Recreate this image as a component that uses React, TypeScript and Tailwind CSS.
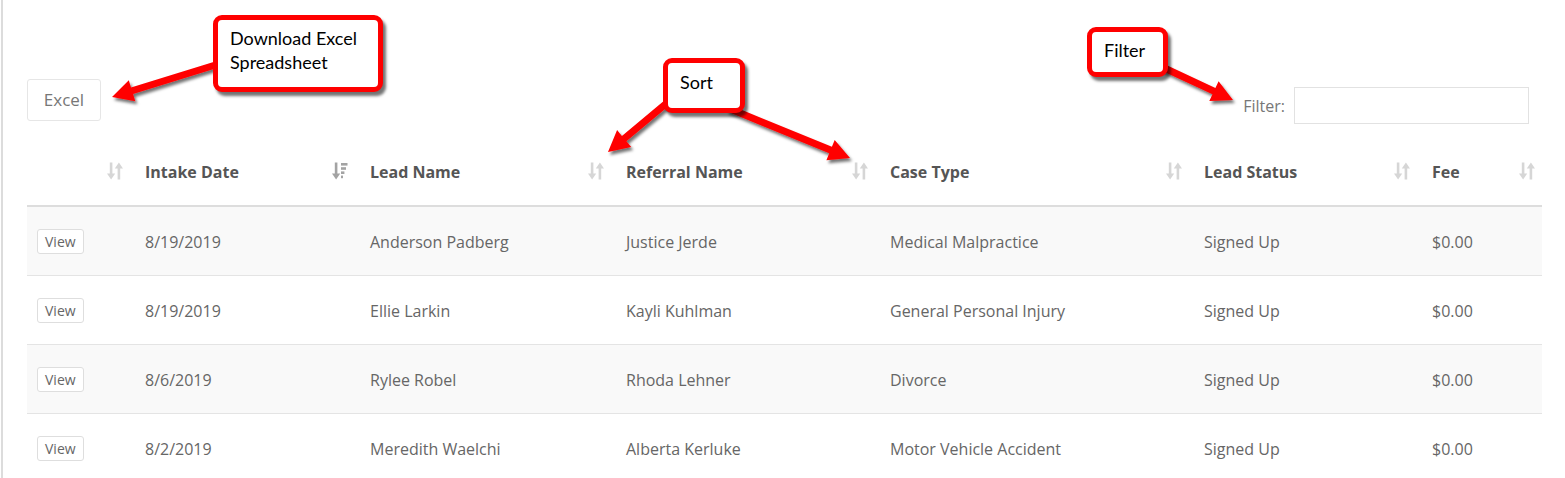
import React from "react";

const leads = [
  { date: "8/19/2019", name: "Anderson Padberg", referral: "Justice Jerde", type: "Medical Malpractice", status: "Signed Up", fee: "$0.00" },
  { date: "8/19/2019", name: "Ellie Larkin", referral: "Kayli Kuhlman", type: "General Personal Injury", status: "Signed Up", fee: "$0.00" },
  { date: "8/6/2019", name: "Rylee Robel", referral: "Rhoda Lehner", type: "Divorce", status: "Signed Up", fee: "$0.00" },
  { date: "8/2/2019", name: "Meredith Waelchi", referral: "Alberta Kerluke", type: "Motor Vehicle Accident", status: "Signed Up", fee: "$0.00" },
];

const columns = [
  { label: "", w: "w-[103px]", active: false },
  { label: "Intake Date", w: "w-[225px]", active: true },
  { label: "Lead Name", w: "w-[256px]", active: false },
  { label: "Referral Name", w: "w-[264px]", active: false },
  { label: "Case Type", w: "w-[314px]", active: false },
  { label: "Lead Status", w: "w-[228px]", active: false },
  { label: "Fee", w: "w-[125px]", active: false },
];

function SortIcon({ active }: { active: boolean }) {
  if (active) {
    return (
      <svg width="16" height="18" viewBox="0 0 16 18" className="text-[#a3a3a3]" fill="currentColor">
        <rect x="2.8" y="0.5" width="2.6" height="12" />
        <polygon points="0,11.5 8.2,11.5 4.1,17.5" />
        <rect x="9" y="1" width="6.5" height="2.6" />
        <rect x="9" y="5.2" width="5" height="2.6" />
        <rect x="9" y="9.4" width="3.4" height="2.6" />
        <rect x="9" y="13.6" width="2" height="2.6" />
      </svg>
    );
  }
  return (
    <svg width="16" height="18" viewBox="0 0 16 18" className="text-[#d6d6d6]" fill="currentColor">
      <rect x="2.8" y="0.5" width="2.6" height="12" />
      <polygon points="0,11.5 8.2,11.5 4.1,17.5" />
      <rect x="10.6" y="5.5" width="2.6" height="12" />
      <polygon points="7.8,6.5 16,6.5 11.9,0.5" />
    </svg>
  );
}

function arrow(x1: number, y1: number, x2: number, y2: number) {
  const dx = x2 - x1, dy = y2 - y1;
  const len = Math.hypot(dx, dy);
  const ux = dx / len, uy = dy / len;
  const nx = -uy, ny = ux;
  const w = 3.5, hw = 11, hl = 21;
  const bx = x2 - ux * hl, by = y2 - uy * hl;
  const pts = [
    [x1 + nx * w, y1 + ny * w],
    [bx + nx * w, by + ny * w],
    [bx + nx * hw, by + ny * hw],
    [x2, y2],
    [bx - nx * hw, by - ny * hw],
    [bx - nx * w, by - ny * w],
    [x1 - nx * w, y1 - ny * w],
  ];
  return pts.map(p => p.map(v => v.toFixed(1)).join(",")).join(" ");
}

function Callout({ className, children }: { className: string; children: React.ReactNode }) {
  return (
    <div className={`absolute bg-white border-[5px] border-[#ff0000] rounded-[9px] pl-3 pt-[6px] text-black text-[18px] leading-[24px] shadow-[3px_4px_3px_rgba(0,0,0,0.55)] font-['Lato',sans-serif] ${className}`}>
      {children}
    </div>
  );
}

export default function App() {
  return (
    <div className="relative h-[478px] bg-white border-l-2 border-[#dcdcdc] ml-px pl-[24px] pr-[23px] pt-[79px] font-['Open_Sans',sans-serif] overflow-hidden">
      <div className="flex items-start justify-between pr-[13px]">
        <button className="h-[42px] w-[74px] border border-[#e6e6e6] rounded-[3px] text-[17px] text-[#777]">Excel</button>
        <div className="flex items-center gap-[9px] mt-2">
          <span className="text-[16px] text-[#777]">Filter:</span>
          <input className="h-[37px] w-[235px] border border-[#e2e2e2] outline-none px-2 text-sm" />
        </div>
      </div>

      <table className="table-fixed w-[1515px] mt-[13px] border-collapse">
        <thead>
          <tr className="border-b-2 border-[#dddddd]">
            {columns.map((c, i) => (
              <th key={i} className={`${c.w} relative pl-[15px] pt-[24px] pb-[22px] text-left text-[16px] leading-[22px] font-bold text-[#555]`}>
                {c.label}
                <span className="absolute right-[7px] top-1/2 -translate-y-1/2 flex">
                  <SortIcon active={c.active} />
                </span>
              </th>
            ))}
          </tr>
        </thead>
        <tbody>
          {leads.map((l, i) => (
            <tr key={i} className={`border-t border-[#e4e4e4] ${i % 2 === 0 ? "bg-[#f9f9f9]" : "bg-white"}`}>
              <td className="pl-[10px] h-[69px] pt-[2px] pb-0 align-middle">
                <button className="block h-[25px] px-[7px] bg-white border border-[#dedede] rounded-[3px] text-[14px] leading-[20px] text-[#666]">View</button>
              </td>
              {[l.date, l.name, l.referral, l.type, l.status, l.fee].map((v, j) => (
                <td key={j} className="pl-[15px] h-[69px] pt-[2px] pb-0 align-middle text-[16px] leading-[22px] text-[#666] whitespace-nowrap">{v}</td>
              ))}
            </tr>
          ))}
        </tbody>
      </table>

      {/* annotation overlay */}
      <svg className="absolute -left-[3px] top-0 pointer-events-none" width="1565" height="478">
        <defs>
          <filter id="sh" x="-20%" y="-20%" width="140%" height="140%">
            <feDropShadow dx="2" dy="3" stdDeviation="1.4" floodColor="#000" floodOpacity="0.55" />
          </filter>
        </defs>
        <g fill="#ff0000" filter="url(#sh)">
          <polygon points={arrow(225, 62, 112, 97)} />
          <polygon points={arrow(680, 92, 608, 152)} />
          <polygon points={arrow(728, 108, 850, 158)} />
          <polygon points={arrow(1160, 66, 1233, 100)} />
        </g>
      </svg>
      <Callout className="left-[210px] top-[15px] w-[170px] h-[77px]">Download Excel<br />Spreadsheet</Callout>
      <Callout className="left-[660px] top-[58px] w-[82px] h-[55px] pt-[7px]">Sort</Callout>
      <Callout className="left-[1084px] top-[27px] w-[81px] h-[50px]">Filter</Callout>
    </div>
  );
}
